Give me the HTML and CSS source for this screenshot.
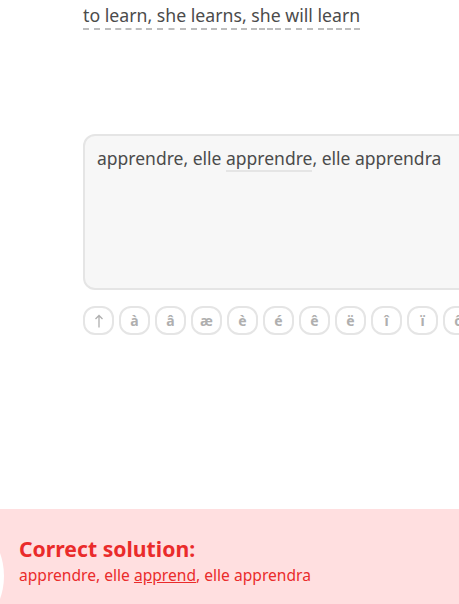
FILE: index.html
```html
<!DOCTYPE html>
<html>
<head>
<meta charset="utf-8">
<link rel="stylesheet" href="styles.css">
</head>
<body>
<div class="page">
  <div class="prompt">
    <span class="tok">to</span> <span class="tok">learn,</span> <span class="tok">she</span> <span class="tok">learns,</span> <span class="tok">she</span> <span class="tok">will</span> <span class="tok">learn</span>
  </div>
  <div class="answer">
    <div class="answer-text">apprendre, elle <span class="mark">apprendre</span>, elle apprendra</div>
  </div>
  <div class="keys">
    <span class="key"><svg class="arrow" width="10" height="14" viewBox="0 0 10 14"><path d="M5 13.5V1.5M1.5 5L5 1.5L8.5 5" fill="none" stroke="#afafaf" stroke-width="1.3"/></svg></span>
    <span class="key">à</span>
    <span class="key">â</span>
    <span class="key">æ</span>
    <span class="key">è</span>
    <span class="key">é</span>
    <span class="key">ê</span>
    <span class="key">ë</span>
    <span class="key">î</span>
    <span class="key">ï</span>
    <span class="key">ô</span>
  </div>
</div>
<div class="banner">
  <div class="blob"></div>
  <div class="banner-title">Correct solution:</div>
  <div class="banner-text">apprendre, elle <span class="fix">apprend</span>, elle apprendra</div>
</div>
</body>
</html>
```
FILE: styles.css
```css
html, body {
  margin: 0;
  padding: 0;
  width: 459px;
  height: 604px;
  overflow: hidden;
  background: #fff;
  font-family: "Noto Sans", "DejaVu Sans", sans-serif;
}
.page {
  padding-left: 83px;
  height: 509px;
  overflow: hidden;
}
.prompt {
  padding-top: 4px;
  font-size: 17.7px;
  line-height: 22px;
  color: #4b4b4b;
  white-space: nowrap;
}
.tok {
  border-bottom: 2px dashed #bdbdbd;
  padding-bottom: 1px;
}
.answer {
  margin-top: 108px;
  width: 420px;
  height: 152px;
  border: 2px solid #e5e5e5;
  border-radius: 12px;
  background: #f7f7f7;
}
.answer-text {
  padding: 10px 12px;
  font-size: 17.5px;
  line-height: 24px;
  color: #4b4b4b;
  white-space: nowrap;
}
.mark {
  border-bottom: 2px solid #e5e5e5;
}
.keys {
  display: flex;
  gap: 5px;
  margin-top: 16px;
  white-space: nowrap;
}
.key {
  flex: none;
  width: 27px;
  height: 25px;
  border: 2px solid #e5e5e5;
  border-radius: 12px;
  display: flex;
  align-items: center;
  justify-content: center;
  font-size: 14px;
  font-weight: bold;
  color: #afafaf;
}
.banner {
  position: relative;
  background: #ffdfe0;
  height: 95px;
  padding: 26px 19px 0;
  box-sizing: border-box;
  color: #ea2b2b;
  overflow: hidden;
}
.blob {
  position: absolute;
  left: -132px;
  top: -1px;
  width: 136px;
  height: 136px;
  border-radius: 50%;
  background: #fff;
}
.banner-title {
  font-size: 21.2px;
  font-weight: bold;
  line-height: 27px;
}
.banner-text {
  margin-top: 2px;
  font-size: 15.6px;
  line-height: 22px;
}
.fix {
  text-decoration: underline;
}
```
